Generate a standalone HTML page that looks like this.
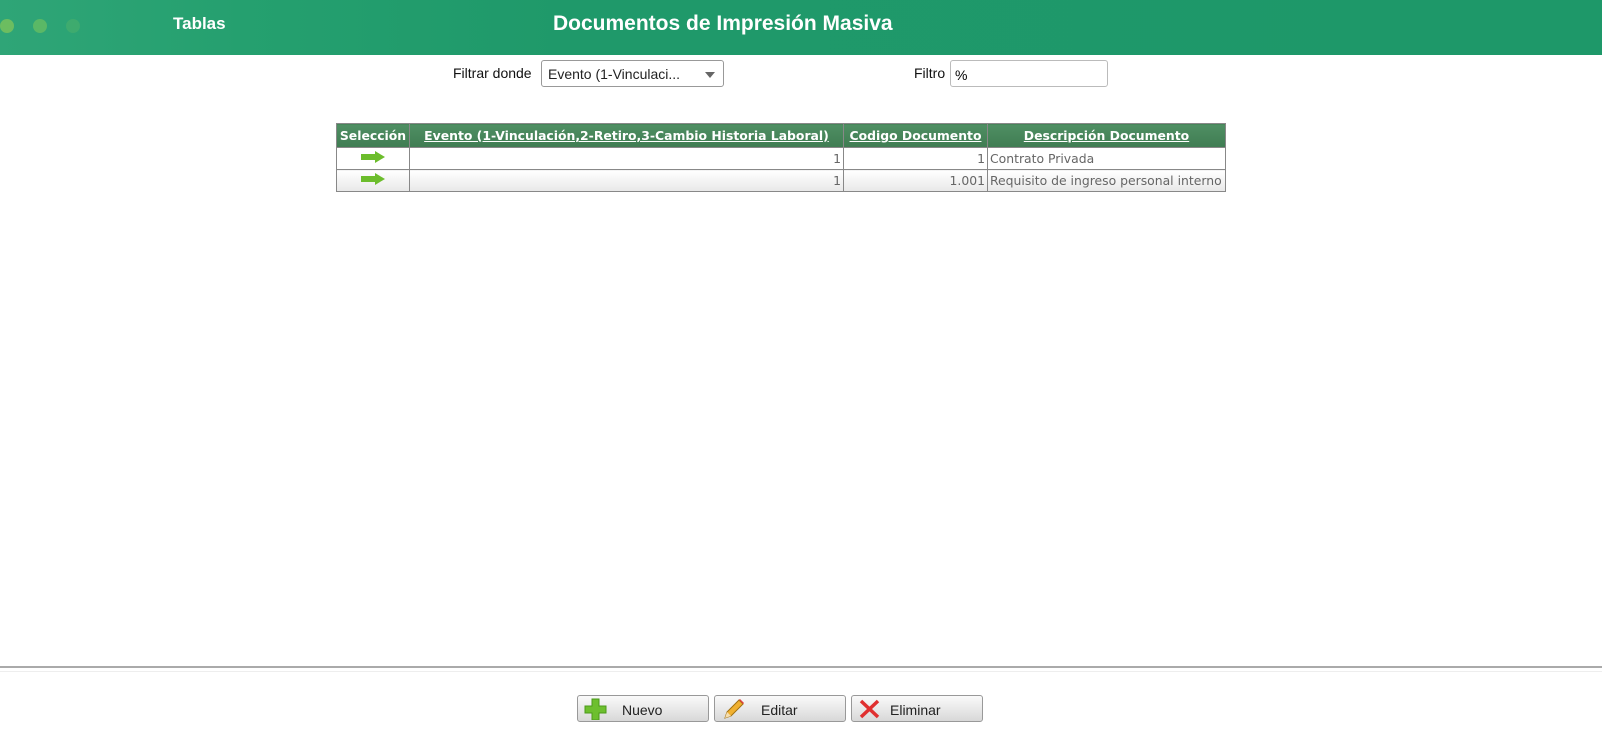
<!DOCTYPE html>
<html><head><meta charset="utf-8"><style>
body{margin:0;width:1602px;height:754px;background:#fff;font-family:"Liberation Sans","DejaVu Sans",sans-serif;position:relative;overflow:hidden}
.hdr{position:absolute;left:0;top:0;width:1602px;height:55px;background:linear-gradient(90deg,#2fa577 0%,#25a06f 15%,#1f996a 35%,#1e9869 100%)}
.dot{position:absolute;top:19px;width:14px;height:14px;border-radius:50%}
.t1{position:absolute;left:173px;top:14px;color:#fff;font-weight:bold;font-size:17px}
.t2{position:absolute;left:553px;top:12px;color:#fff;font-weight:bold;font-size:21px}
.lbl{position:absolute;font-size:14px;color:#111}
.sel{position:absolute;left:541px;top:60px;width:183px;height:27px;border:1px solid #999;border-radius:3px;box-sizing:border-box;font-size:14px;padding:5px 6px;color:#222}
.sel:after{content:"";position:absolute;right:8px;top:11px;border:5px solid transparent;border-top:6px solid #666}
.inp{position:absolute;left:950px;top:60px;width:158px;height:27px;border:1px solid #bbb;border-radius:3px;box-sizing:border-box;font-size:14px;padding:6px 4px}
table{position:absolute;left:336px;top:123px;border-collapse:collapse;table-layout:fixed;width:889px;font-family:"DejaVu Sans","Liberation Sans",sans-serif;font-size:12.4px}
th{background:linear-gradient(#4f8f63,#3f7c52);color:#fff;height:23px;padding:0 1px;border:1px solid #888;font-weight:bold;white-space:nowrap;overflow:hidden}
th u{text-decoration:underline}
td{border:1px solid #888;height:21px;padding:0 2px;color:#666;white-space:nowrap;overflow:hidden}
tr.b td{background:linear-gradient(#fff,#e8e8e8)}
.r{text-align:right}
.hr1{position:absolute;left:0;top:666px;width:1602px;height:2px;background:#aaa}
.hr2{position:absolute;left:0;top:671px;width:1602px;height:1px;background:#eee}
.btn{position:absolute;top:695px;width:132px;height:27px;border:1px solid #999;border-radius:3px;box-sizing:border-box;background:linear-gradient(#fafafa,#d8d8d8);font-size:14px;color:#222}
.btn span{position:absolute;top:6px}
.btn svg{position:absolute;left:6px;top:2px}
</style></head><body>
<div class="hdr">
<div class="dot" style="left:0;background:#7cc35a;opacity:.8"></div>
<div class="dot" style="left:33px;background:#6ec060;opacity:.7"></div>
<div class="dot" style="left:66px;background:#5bb766;opacity:.4"></div>
<div class="t1">Tablas</div>
<div class="t2">Documentos de Impresión Masiva</div>
</div>
<div class="lbl" style="left:453px;top:65px">Filtrar donde</div>
<div class="sel">Evento (1-Vinculaci...</div>
<div class="lbl" style="left:914px;top:65px">Filtro</div>
<div class="inp">%</div>
<table>
<colgroup><col style="width:73px"><col style="width:434px"><col style="width:144px"><col style="width:238px"></colgroup>
<tr><th>Selección</th><th><u>Evento (1-Vinculación,2-Retiro,3-Cambio Historia Laboral)</u></th><th><u>Codigo Documento</u></th><th><u>Descripción Documento</u></th></tr>
<tr><td style="text-align:center"><svg width="26" height="12"><path d="M1 3h14V0l10 6-10 6V9H1z" fill="#6cbd2c"/></svg></td><td class="r">1</td><td class="r">1</td><td>Contrato Privada</td></tr>
<tr class="b"><td style="text-align:center"><svg width="26" height="12"><path d="M1 3h14V0l10 6-10 6V9H1z" fill="#6cbd2c"/></svg></td><td class="r">1</td><td class="r">1.001</td><td>Requisito de ingreso personal interno</td></tr>
</table>
<div class="hr1"></div><div class="hr2"></div>
<div class="btn" style="left:577px"><svg width="24" height="22"><path d="M8 1h7v7h7v7h-7v7H8v-7H1V8h7z" fill="#6dbf2e" stroke="#4a9a1a"/></svg><span style="left:44px">Nuevo</span></div>
<div class="btn" style="left:714px"><svg width="24" height="22"><path d="M4 20l2-6L18 2l4 4L10 18z" fill="#f0b030" stroke="#a07010"/><path d="M4 20l2-6 4 4z" fill="#f5deb0"/><path d="M18 2l4 4 1-1-4-4z" fill="#e04040"/></svg><span style="left:46px">Editar</span></div>
<div class="btn" style="left:851px"><svg width="24" height="22"><path d="M3 3L20 19M20 3L3 19" stroke="#e03030" stroke-width="3.5"/></svg><span style="left:38px">Eliminar</span></div>
</body></html>
